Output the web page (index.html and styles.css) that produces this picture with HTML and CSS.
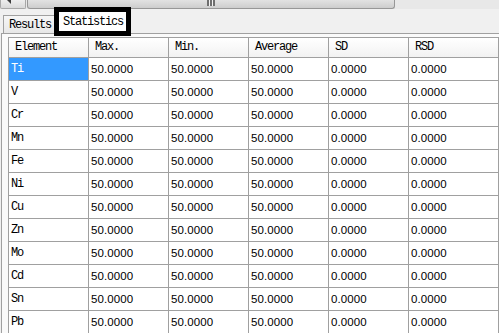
FILE: index.html
```html
<!DOCTYPE html>
<html>
<head>
<meta charset="utf-8">
<link rel="stylesheet" href="styles.css">
</head>
<body>
<div class="scrollbar">
  <div class="sb-btn"><span class="sb-arrow"></span></div>
  <div class="sb-thumb"><span class="grip"></span></div>
  <div class="sb-track"></div>
</div>
<div class="tabstrip">
  <div class="tab">Results</div>
  <div class="tab active">Statistics</div>
</div>
<div class="panel">
  <div class="grid">
    <div class="hd">Element</div><div class="hd">Max.</div><div class="hd">Min.</div><div class="hd">Average</div><div class="hd">SD</div><div class="hd">RSD</div>
    <div class="el sel">Ti</div><div class="num">50.0000</div><div class="num">50.0000</div><div class="num">50.0000</div><div class="num">0.0000</div><div class="num">0.0000</div>
    <div class="el">V</div><div class="num">50.0000</div><div class="num">50.0000</div><div class="num">50.0000</div><div class="num">0.0000</div><div class="num">0.0000</div>
    <div class="el">Cr</div><div class="num">50.0000</div><div class="num">50.0000</div><div class="num">50.0000</div><div class="num">0.0000</div><div class="num">0.0000</div>
    <div class="el">Mn</div><div class="num">50.0000</div><div class="num">50.0000</div><div class="num">50.0000</div><div class="num">0.0000</div><div class="num">0.0000</div>
    <div class="el">Fe</div><div class="num">50.0000</div><div class="num">50.0000</div><div class="num">50.0000</div><div class="num">0.0000</div><div class="num">0.0000</div>
    <div class="el">Ni</div><div class="num">50.0000</div><div class="num">50.0000</div><div class="num">50.0000</div><div class="num">0.0000</div><div class="num">0.0000</div>
    <div class="el">Cu</div><div class="num">50.0000</div><div class="num">50.0000</div><div class="num">50.0000</div><div class="num">0.0000</div><div class="num">0.0000</div>
    <div class="el">Zn</div><div class="num">50.0000</div><div class="num">50.0000</div><div class="num">50.0000</div><div class="num">0.0000</div><div class="num">0.0000</div>
    <div class="el">Mo</div><div class="num">50.0000</div><div class="num">50.0000</div><div class="num">50.0000</div><div class="num">0.0000</div><div class="num">0.0000</div>
    <div class="el">Cd</div><div class="num">50.0000</div><div class="num">50.0000</div><div class="num">50.0000</div><div class="num">0.0000</div><div class="num">0.0000</div>
    <div class="el">Sn</div><div class="num">50.0000</div><div class="num">50.0000</div><div class="num">50.0000</div><div class="num">0.0000</div><div class="num">0.0000</div>
    <div class="el">Pb</div><div class="num">50.0000</div><div class="num">50.0000</div><div class="num">50.0000</div><div class="num">0.0000</div><div class="num">0.0000</div>
  </div>
</div>
</body>
</html>
```
FILE: styles.css
```css
html, body {
  margin: 0;
  padding: 0;
}
body {
  width: 499px;
  height: 333px;
  overflow: hidden;
  background: #f0f0f0;
  font-family: "Liberation Mono", monospace;
  color: #000;
}
.scrollbar {
  display: flex;
  height: 9px;
  background: #e8e8e8;
}
.sb-btn {
  position: relative;
  width: 26px;
  box-sizing: border-box;
  border: 1px solid #a8a8a8;
  border-top: none;
  border-radius: 0 0 2px 2px;
  background: linear-gradient(#eeeeee, #d9d9d9);
  overflow: hidden;
}
.sb-arrow {
  position: absolute;
  left: 6px;
  top: -4px;
  width: 0;
  height: 0;
  border-right: 4px solid #3c3c3c;
  border-top: 4px solid transparent;
  border-bottom: 4px solid transparent;
}
.sb-thumb {
  margin-left: 1px;
  width: 368px;
  box-sizing: border-box;
  border: 1px solid #979797;
  border-top: none;
  border-radius: 0 0 3px 3px;
  background: linear-gradient(#e2e2e2, #cdcdcd);
  display: flex;
  justify-content: center;
}
.grip {
  width: 8px;
  height: 6px;
  background: repeating-linear-gradient(90deg, #6e6e6e 0 2px, #f2f2f2 2px 3px);
}
.sb-track {
  flex: 1;
}
.tabstrip {
  display: flex;
  align-items: flex-end;
  height: 24px;
  padding-left: 3px;
}
.tab {
  width: 52px;
  height: 18px;
  box-sizing: border-box;
  border: 1px solid #a0a0a0;
  border-bottom: none;
  background: linear-gradient(#f6f6f6, #e7e7e7);
  padding-left: 5px;
  font-size: 12px;
  letter-spacing: -1.2px;
  line-height: 18px;
}
.tab.active {
  position: relative;
  z-index: 1;
  width: 77px;
  height: 29px;
  margin-left: -1px;
  margin-bottom: -3px;
  border: 5px solid #000;
  background: #fff;
  padding: 2px 0 0 4px;
  line-height: 17px;
}
.panel {
  margin-left: 1px;
  border-left: 1px solid #a0a0a0;
  border-top: 1px solid #a0a0a0;
  background: #fafafa;
  padding: 3px 0 0 6px;
}
.grid {
  display: grid;
  grid-template-columns: repeat(5, 80px) 90px;
  width: max-content;
  border-left: 1px solid #a0a0a0;
  border-top: 1px solid #a0a0a0;
  background: #fff;
}
.grid > div {
  box-sizing: border-box;
  border-right: 1px solid #a0a0a0;
  border-bottom: 1px solid #a0a0a0;
  height: 23px;
  line-height: 22px;
  white-space: nowrap;
}
.grid > .hd {
  height: 20px;
  line-height: 19px;
  padding-left: 6px;
  background: linear-gradient(#ffffff, #f2f2f2);
  font-size: 12px;
  letter-spacing: -1.2px;
}
.grid > .el {
  padding-left: 2px;
  font-size: 12px;
  letter-spacing: -1.2px;
}
.grid > .sel {
  background: #3399ff;
  color: #fff;
}
.grid > .num {
  padding-left: 2px;
  font-family: "Liberation Sans", Arial, sans-serif;
  font-size: 11.5px;
  letter-spacing: 0.1px;
}
```
